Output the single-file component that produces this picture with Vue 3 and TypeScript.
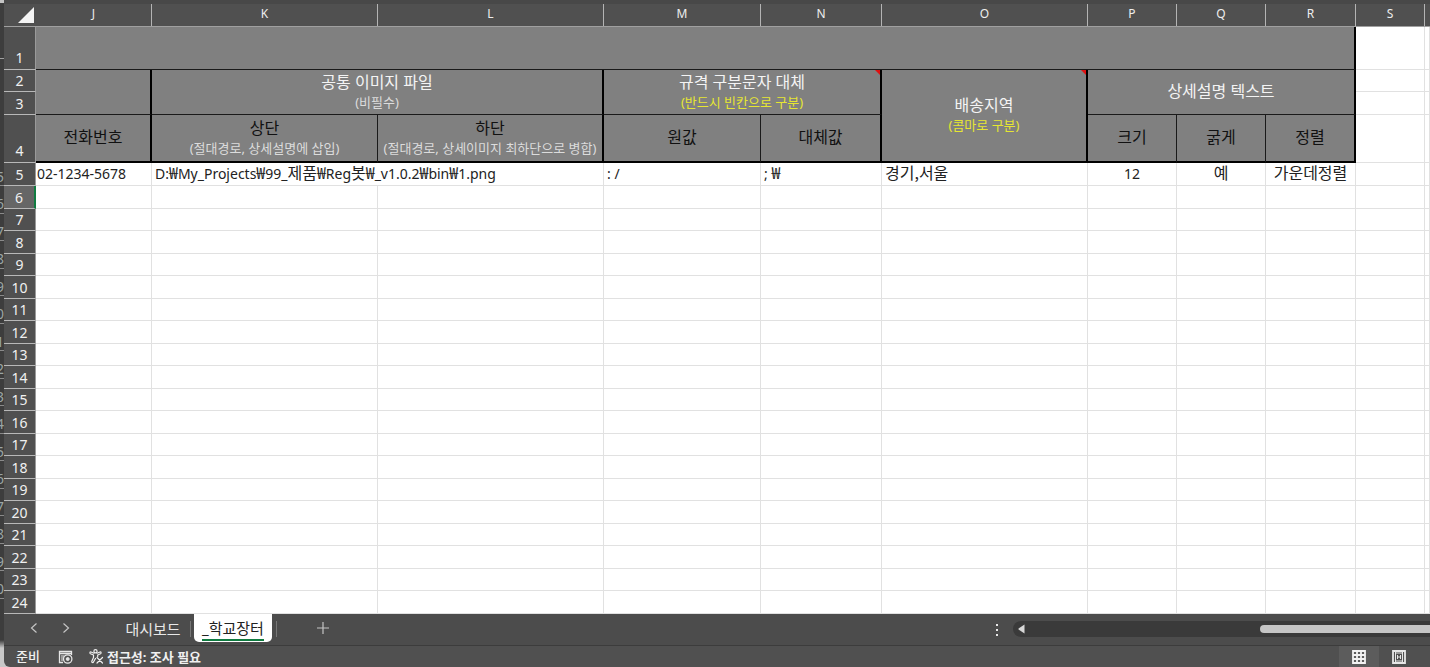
<script setup lang="ts">
interface Column { name: string; cls: string }
interface Run { text: string; korean: boolean }

const columns: Column[] = [
  { name: 'J', cls: 'w-j' },
  { name: 'K', cls: 'w-k' },
  { name: 'L', cls: 'w-k' },
  { name: 'M', cls: 'w-m' },
  { name: 'N', cls: 'w-n' },
  { name: 'O', cls: 'w-o' },
  { name: 'P', cls: 'w-p' },
  { name: 'Q', cls: 'w-p' },
  { name: 'R', cls: 'w-r' },
  { name: 'S', cls: 'w-s' },
]
const emptyRows: number[] = Array.from({ length: 19 }, (_, i) => i + 6)
const backRows: string[] = ['5', '6', '7', '8', '9', '0', '1', '2', '3', '4', '5', '6', '7', '8', '9', '0']

const imagePath = 'D:₩My_Projects₩99_제품₩Reg봇₩_v1.0.2₩bin₩1.png'
const pathRuns: Run[] = imagePath
  .split(/([₩가-힣]+)/)
  .filter((text) => text !== '')
  .map((text) => ({ text, korean: /[₩가-힣]/.test(text) }))
</script>

<template>
  <div class="desktop">
    <div class="back-window" aria-hidden="true">
      <div class="back-top"></div>
      <div class="back-gap"></div>
      <div v-for="(n, i) in backRows" :key="i" class="back-row"><span>{{ n }}</span></div>
    </div>

    <main class="window">
      <div class="sheet">
        <table>
          <colgroup>
            <col class="w-head" />
            <col v-for="c in columns" :key="c.name" :class="c.cls" />
            <col />
          </colgroup>
          <thead>
            <tr class="letters">
              <th class="corner">
                <button type="button" aria-label="모두 선택">
                  <svg width="16" height="16" viewBox="0 0 16 16"><path d="M16 0V16H0Z" fill="#f4f4f4" /></svg>
                </button>
              </th>
              <th v-for="c in columns" :key="c.name" scope="col"><span>{{ c.name }}</span></th>
              <th></th>
            </tr>
          </thead>
          <tbody>
            <tr class="h-1">
              <th scope="row">1</th>
              <td colspan="9" class="fill edge-r"></td>
              <td></td><td></td>
            </tr>
            <tr class="h-2">
              <th scope="row">2</th>
              <td rowspan="2" class="fill edge-r"></td>
              <td rowspan="2" colspan="2" class="fill edge-r">
                <div class="title light">공통 이미지 파일</div>
                <div class="note">(비필수)</div>
              </td>
              <td rowspan="2" colspan="2" class="fill edge-r commented">
                <div class="title light">규격 구분문자 대체</div>
                <div class="note yellow">(반드시 빈칸으로 구분)</div>
              </td>
              <td rowspan="3" class="fill edge-r edge-b commented">
                <div class="title light">배송지역</div>
                <div class="note yellow">(콤마로 구분)</div>
              </td>
              <td rowspan="2" colspan="3" class="fill edge-r">
                <div class="title light">상세설명 텍스트</div>
              </td>
              <td></td><td></td>
            </tr>
            <tr class="h-3">
              <th scope="row">3</th>
              <td></td><td></td>
            </tr>
            <tr class="h-4">
              <th scope="row">4</th>
              <td class="fill edge-r edge-b"><div class="title">전화번호</div></td>
              <td class="fill edge-b">
                <div class="title">상단</div>
                <div class="note">(절대경로, 상세설명에 삽입)</div>
              </td>
              <td class="fill edge-r edge-b">
                <div class="title">하단</div>
                <div class="note">(절대경로, 상세이미지 최하단으로 병합)</div>
              </td>
              <td class="fill edge-b"><div class="title">원값</div></td>
              <td class="fill edge-r edge-b"><div class="title">대체값</div></td>
              <td class="fill edge-b"><div class="title">크기</div></td>
              <td class="fill edge-b"><div class="title">굵게</div></td>
              <td class="fill edge-r edge-b"><div class="title">정렬</div></td>
              <td></td><td></td>
            </tr>
            <tr class="h-3 data">
              <th scope="row">5</th>
              <td class="tight">02-1234-5678</td>
              <td colspan="2"><span v-for="(r, i) in pathRuns" :key="i" :class="{ ko: r.korean }">{{ r.text }}</span></td>
              <td>: /</td>
              <td>; <span class="ko">₩</span></td>
              <td><span class="ko">경기,서울</span></td>
              <td class="mid">12</td>
              <td class="mid"><span class="ko">예</span></td>
              <td class="mid"><span class="ko">가운데정렬</span></td>
              <td></td><td></td>
            </tr>
            <tr v-for="n in emptyRows" :key="n" :class="[n % 2 ? 'h-2' : 'h-3', { current: n === 6 }]">
              <th scope="row">{{ n }}</th>
              <td v-for="c in columns" :key="c.name"></td>
              <td></td>
            </tr>
          </tbody>
        </table>
      </div>

      <nav class="tabs" aria-label="시트">
        <button type="button" class="arrow" aria-label="이전 시트">
          <svg width="8" height="12" viewBox="0 0 8 12"><path d="M6.500 1.500L1.500 6L6.500 10.500" /></svg>
        </button>
        <button type="button" class="arrow" aria-label="다음 시트">
          <svg width="8" height="12" viewBox="0 0 8 12"><path d="M1.500 1.500L6.500 6L1.500 10.500" /></svg>
        </button>
        <button type="button" class="tab">대시보드</button>
        <i class="divider"></i>
        <button type="button" class="tab active"><span>_학교장터</span></button>
        <i class="divider"></i>
        <button type="button" class="add" aria-label="새 시트">
          <svg width="12" height="12" viewBox="0 0 12 12"><path d="M6 0V12M0 6H12" /></svg>
        </button>
        <svg class="dots" width="4" height="12" viewBox="0 0 4 12"><path d="M1 0h2v2H1zM1 5h2v2H1zM1 10h2v2H1z" fill="#e8e8e8" /></svg>
        <div class="scroll">
          <button type="button" aria-label="왼쪽으로 스크롤">
            <svg width="7" height="10" viewBox="0 0 7 10"><path d="M6.500 .5V9.500L.5 5.500V4.500Z" fill="#d8d8d8" /></svg>
          </button>
          <div class="thumb"></div>
        </div>
      </nav>

      <footer class="status">
        <span class="ready">준비</span>
        <button type="button" class="macro" aria-label="매크로 기록">
          <svg width="15" height="14" viewBox="0 0 15 14" fill="none" stroke="#e6e6e6">
            <path d="M5 12.500H1.500V1.500H13.500V5M1.500 3.500H13.500" stroke-width="1.300" />
            <path d="M3 6H6M3 8H5M3 10H5" />
            <circle cx="9.700" cy="9" r="4.200" stroke-width="1.300" />
            <circle cx="9.700" cy="9" r="1.500" fill="#e6e6e6" />
          </svg>
        </button>
        <button type="button" class="access">
          <svg width="15" height="15" viewBox="0 0 15 15" fill="none" stroke="#eee" stroke-width="1.200" stroke-linejoin="round" stroke-linecap="round">
            <circle cx="6.500" cy="2.300" r="1.600" />
            <path d="M5 4.300L2 3C.8 2.700.5 4.200 1.500 4.700L4.500 6V8.500L2.800 12.300C2.500 13.600 4 14 4.500 13L6.500 9.500M8 4.300L11 3C12.200 2.700 12.500 4.200 11.500 4.700L8.700 6V7.500" />
            <path d="M8 8.500L13.500 14M13.500 8.500L8 14" />
          </svg>
          <span>접근성: 조사 필요</span>
        </button>
        <div class="views">
          <button type="button" class="view on" aria-label="기본">
            <svg width="14" height="14" viewBox="0 0 14 14"><path d="M1 1H13V13H1ZM5 1V13M9 1V13M1 5H13M1 9H13" fill="none" stroke="#f2f2f2" stroke-width="1.800" /></svg>
          </button>
          <button type="button" class="view" aria-label="페이지 레이아웃">
            <svg width="14" height="14" viewBox="0 0 14 14" fill="none" stroke="#e6e6e6"><path d="M1 1H13V13H1Z" stroke-width="1.800" /><path d="M3.500 2V12M10.500 2V12M3.500 3H10.500M3.500 11H10.500M5.500 5V9M8.500 5V9M5.500 7H8.500" /></svg>
          </button>
        </div>
      </footer>
    </main>
  </div>
</template>

<style scoped>
.desktop {
  display: flex;
  height: 100vh;
  overflow: hidden;
  background: linear-gradient(#3d3d3d 640px, #c8c8c8 648px);
  font-family: "Noto Sans", "Noto Sans CJK KR", sans-serif;
}
.back-window {
  flex: none;
  width: 4px;
  overflow: hidden;
}
.back-top { height: 59px; box-sizing: border-box; border-top: 3px solid #c4c4c4; border-bottom: 1px solid #a0a0a0; }
.back-gap { height: 100px; }
.back-row {
  display: flex;
  justify-content: flex-end;
  height: 27px;
  box-sizing: border-box;
  border-bottom: 1px solid #8a8a8a;
  color: #9aa5a5;
  font-size: 14px;
  line-height: 36px;
}
.back-row:nth-child(even) { height: 28px; }
.window {
  flex: 1;
  min-width: 0;
  display: flex;
  flex-direction: column;
  background: #505050;
  border-bottom-left-radius: 6px;
  overflow: hidden;
}
.sheet { flex: 1; min-height: 0; overflow: hidden; background: #fff; }
table {
  width: 100%;
  table-layout: fixed;
  border-collapse: separate;
  border-spacing: 0;
}
.w-head { width: 32px; }
.w-j { width: 116px; }
.w-k { width: 226px; }
.w-m { width: 157px; }
.w-n { width: 121px; }
.w-o { width: 206px; }
.w-p { width: 89px; }
.w-r { width: 90px; }
.w-s { width: 69px; }
th, td { padding: 0; box-sizing: border-box; font-weight: 400; }
.letters th {
  height: 27px;
  padding-top: 4px;
  background: linear-gradient(#484848 4px, #505050 4px);
  border-bottom: 1px solid #a0a0a0;
  color: #eee;
  font-size: 12px;
  line-height: 20px;
}
.letters th span { display: block; border-right: 1px solid #b4b4b4; height: 22px; }
.corner button { display: flex; justify-content: flex-end; width: 30px; padding: 0; border: 0; background: none; }
tbody th {
  background: #505050;
  border-right: 1px solid #9a9a9a;
  border-bottom: 1px solid #b8b8b8;
  color: #f0f0f0;
  font-size: 14px;
  line-height: 20px;
  vertical-align: bottom;
}
td { border-right: 1px solid #e1e1e1; border-bottom: 1px solid #e1e1e1; white-space: nowrap; }
.h-1 > * { height: 43px; }
.h-2 > * { height: 22px; }
.h-3 > * { height: 23px; }
.h-4 > * { height: 48px; }
.h-1 th, .h-4 th { padding-bottom: 1px; }
.current th { background: #666; border-right: 2px solid #107c41; }
.fill {
  background: #808080;
  border-right-color: #1a1a1a;
  border-bottom-color: #1a1a1a;
  text-align: center;
  vertical-align: middle;
}
.edge-r { border-right: 2px solid #000; }
.edge-b { border-bottom: 2px solid #000; }
.title { font-size: 16px; line-height: 21px; color: #111; }
.title:only-child { margin-bottom: 2px; }
.light { color: #f4f4f4; }
.note { margin-bottom: 2px; font-size: 13px; line-height: 18px; color: #dcdcdc; }
.yellow { color: #e6e632; }
.commented { position: relative; }
.commented::after {
  content: "";
  position: absolute;
  top: 0;
  right: 0;
  border-top: 5px solid #e01010;
  border-left: 5px solid transparent;
}
.data td { padding-left: 3px; font-size: 14px; line-height: 20px; color: #222; }
.data .tight { padding-left: 1px; }
.data .mid { padding-left: 0; text-align: center; }
.ko { font-family: "Noto Sans CJK KR", sans-serif; font-size: 16px; line-height: 16px; }
button { font-family: inherit; cursor: pointer; }
.tabs {
  flex: none;
  display: flex;
  align-items: flex-start;
  height: 32px;
  box-sizing: border-box;
  background: #4c4c4c;
  border-bottom: 1px solid #3c3c3c;
  padding-left: 14px;
}
.tabs > button { border: 0; background: none; padding: 0; height: 28px; }
.tabs .arrow { width: 32px; height: 30px; }
.arrow svg, .add svg { fill: none; stroke: #c4c4c4; stroke-width: 1.2; }
.tabs .tab { margin-left: 30px; width: 82px; color: #e8e8e8; font-size: 15px; line-height: 30px; text-align: center; }
.divider { width: 1px; height: 16px; margin-top: 7px; background: #777; }
.divider:first-of-type { margin-left: -4px; }
.tabs .active {
  margin: 0 4px 0 3px;
  width: 78px;
  background: #fff;
  border-radius: 0 0 5px 5px;
  color: #222;
  line-height: 28px;
}
.active span { display: inline-block; height: 24px; line-height: 22px; border-bottom: 2px solid #107c41; box-sizing: border-box; }
.tabs .add { width: 92px; height: 30px; }
.dots { margin: 10px 14px 0 auto; }
.scroll {
  flex: none;
  display: flex;
  align-items: center;
  width: 417px;
  height: 16px;
  margin-top: 7px;
  background: #3a3a3a;
  border-radius: 8px 0 0 8px;
}
.scroll button { display: flex; padding: 0 5px; border: 0; background: none; }
.thumb { width: 170px; height: 8px; margin-left: auto; background: #c6c6c6; border-radius: 4px 0 0 4px; }
.status {
  flex: none;
  display: flex;
  align-items: center;
  height: 21px;
  padding-left: 12px;
  color: #f0f0f0;
  font-size: 13px;
  line-height: 19px;
  font-weight: 700;
}
.ready { font-weight: 500; }
.status button { display: flex; align-items: center; padding: 0; border: 0; background: none; color: inherit; font-size: 13px; font-weight: 700; }
.status .macro { margin-left: 18px; }
.status .access { margin-left: 16px; gap: 3px; }
.views { display: flex; align-self: stretch; margin-left: auto; padding-right: 11px; }
.status .view { width: 40px; justify-content: center; }
.status .on { background: #5c5c5c; }
</style>

<style>
body { overflow: hidden; }
</style>
